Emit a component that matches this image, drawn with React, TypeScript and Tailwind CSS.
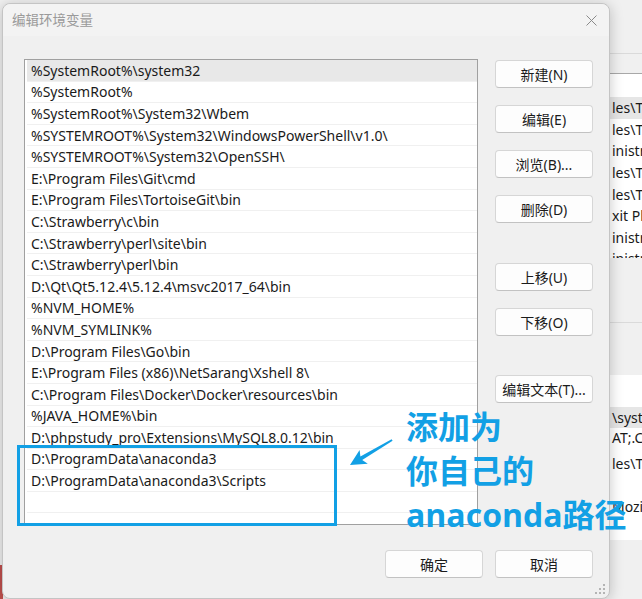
import * as React from 'react';

const PATHS = [
  '%SystemRoot%\\system32',
  '%SystemRoot%',
  '%SystemRoot%\\System32\\Wbem',
  '%SYSTEMROOT%\\System32\\WindowsPowerShell\\v1.0\\',
  '%SYSTEMROOT%\\System32\\OpenSSH\\',
  'E:\\Program Files\\Git\\cmd',
  'E:\\Program Files\\TortoiseGit\\bin',
  'C:\\Strawberry\\c\\bin',
  'C:\\Strawberry\\perl\\site\\bin',
  'C:\\Strawberry\\perl\\bin',
  'D:\\Qt\\Qt5.12.4\\5.12.4\\msvc2017_64\\bin',
  '%NVM_HOME%',
  '%NVM_SYMLINK%',
  'D:\\Program Files\\Go\\bin',
  'E:\\Program Files (x86)\\NetSarang\\Xshell 8\\',
  'C:\\Program Files\\Docker\\Docker\\resources\\bin',
  '%JAVA_HOME%\\bin',
  'D:\\phpstudy_pro\\Extensions\\MySQL8.0.12\\bin',
  'D:\\ProgramData\\anaconda3',
  'D:\\ProgramData\\anaconda3\\Scripts',
  '',
  '',
];

const BACK_ROWS = ['les\\Tortoise', 'les\\Tortoise', 'inistrator', 'les\\Tortoise', 'les\\Tortoise', 'xit PhantomPDF', 'inistrator', 'inistrator'];

const Button: React.FC<{ label: string; className?: string }> = ({ label, className = '' }) => (
  <button
    className={`h-[28px] w-[98px] rounded-[4px] border border-[#d6d6d6] border-b-[#c2c2c2] bg-[#fdfdfd] text-[14px] text-[#1b1b1b] ${className}`}
  >
    {label}
  </button>
);

const ResizeGrip = () => (
  <svg width="12" height="12" viewBox="0 0 12 12" className="absolute bottom-[3px] right-[3px]">
    {[
      [9, 1],
      [5, 5],
      [9, 5],
      [1, 9],
      [5, 9],
      [9, 9],
    ].map(([x, y], i) => (
      <rect key={i} x={x} y={y} width="2" height="2" fill="#b4b4b4" />
    ))}
  </svg>
);

export default function App() {
  return (
    <div className="relative h-[599px] w-[642px] overflow-hidden bg-[#f0f0f0] font-['Noto_Sans','Noto_Sans_CJK_SC',sans-serif]">
      {/* window behind the dialog */}
      <div className="flex h-full">
        <div className="flex w-[610px] flex-col">
          <div className="-mt-[18px] ml-[300px] text-[14px] text-[#555]">新建变量</div>
          <div className="mt-auto h-[34px] w-[3px] bg-[#c0504d]" />
        </div>
        <div className="flex-1 overflow-hidden text-[14px] text-[#1a1a1a] whitespace-nowrap">
          <div className="h-[54px] border-b border-[#dadada]" />
          <div className="h-[19px]" />
          <div className="h-[185px] overflow-hidden border-t border-[#a8a8a8] bg-white pt-[23px]">
            {BACK_ROWS.map((t, i) => (
              <div key={i} className={`flex h-[21.6px] items-center pl-[2px] ${i === 0 ? 'bg-[#e6e6e6]' : ''}`}>
                {t}
              </div>
            ))}
          </div>
          <div className="h-[65px] border-b border-[#dadada]" />
          <div className="h-[52px]" />
          <div className="h-[165px] bg-white pt-[32px]">
            <div className="flex h-[21px] items-center bg-[#e6e6e6] pl-[2px]">\system32</div>
            <div className="flex h-[18px] items-center pl-[2px]">AT;.CMD;.VBS</div>
            <div className="mt-[8px] flex h-[18px] items-center pl-[2px]">les\Tortoise</div>
            <div className="mt-[25px] flex h-[18px] items-center pl-[2px]">Mozilla</div>
          </div>
        </div>
      </div>

      {/* 编辑环境变量 dialog */}
      <div className="absolute left-[2px] top-[3px] flex h-[596px] w-[608px] flex-col rounded-[8px] border border-[#c4c4c4] bg-[#f0f0f0] shadow-[0_2px_14px_rgba(0,0,0,0.22)]">
        <div className="flex h-[32px] items-center justify-between rounded-t-[8px] bg-[#f3f3f3] pl-[9px] pr-[12px]">
          <span className="text-[13.5px] text-[#9a9a9a]">编辑环境变量</span>
          <svg width="11" height="11" viewBox="0 0 11 11" stroke="#8a8a8a" strokeWidth="1">
            <path d="M0.5 0.5 L10.5 10.5 M10.5 0.5 L0.5 10.5" />
          </svg>
        </div>

        <div className="flex gap-[17px] pl-[21px] pt-[23px]">
          <div className="h-[466px] w-[454px] overflow-hidden border border-[#a0a0a0] bg-white text-[14px] text-[#1a1a1a]">
            {PATHS.map((p, i) => (
              <div
                key={i}
                className={`ml-[2px] flex h-[21.6px] items-center border-b border-[#f0f0f0] pl-[4px] whitespace-nowrap ${i === 0 ? 'bg-[#e8e8e8]' : ''}`}
              >
                {p}
              </div>
            ))}
          </div>

          <div className="flex flex-col pt-[1px]">
            <Button label="新建(N)" />
            <Button label="编辑(E)" className="mt-[17px]" />
            <Button label="浏览(B)..." className="mt-[17px]" />
            <Button label="删除(D)" className="mt-[17px]" />
            <Button label="上移(U)" className="mt-[40px]" />
            <Button label="下移(O)" className="mt-[17px]" />
            <Button label="编辑文本(T)..." className="mt-[39px]" />
          </div>
        </div>

        <div className="mt-[25px] flex justify-end gap-[12px] pr-[16px]">
          <Button label="确定" />
          <Button label="取消" />
        </div>

        <ResizeGrip />
      </div>

      {/* annotation */}
      <div className="absolute left-[17px] top-[445px] h-[81px] w-[320px] border-[3px] border-[#12a0e5]" />
      <svg className="absolute left-0 top-0" width="642" height="599" viewBox="0 0 642 599">
        <polygon
          points="350,465 359.6,449.9 360.4,456.6 391.6,439.2 392.6,440.8 362.2,460.1 367.8,463.7"
          fill="#12a0e5"
        />
      </svg>
      <div className="absolute left-[406px] top-[405px] text-[32px] font-bold leading-[44px] text-[#12a0e5] font-['Open_Sans','Noto_Sans_CJK_SC',sans-serif]">
        <div>添加为</div>
        <div>你自己的</div>
        <div>anaconda路径</div>
      </div>
    </div>
  );
}
